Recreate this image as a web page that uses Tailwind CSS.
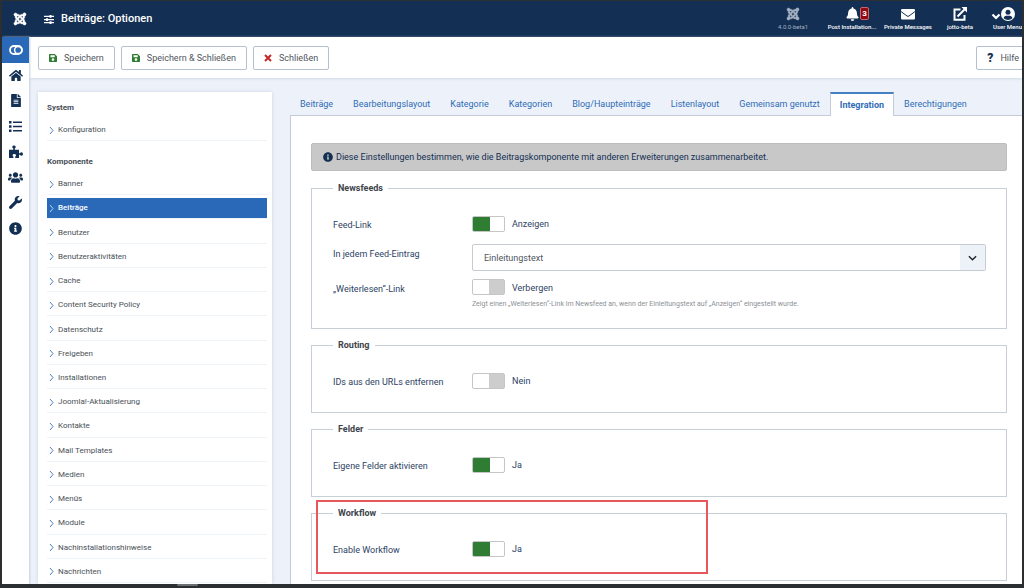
<!DOCTYPE html>
<html lang="de">
<head>
<meta charset="utf-8">
<meta name="viewport" content="width=device-width, initial-scale=1">
<title>Beiträge: Optionen</title>
<script src="https://cdn.jsdelivr.net/npm/@tailwindcss/browser@4"></script>
</head>
<body class="flex h-screen flex-col overflow-hidden bg-[#2b2f31] font-['Roboto',sans-serif] text-[9px] leading-[12px] text-[#2c4263]">

<svg class="hidden" aria-hidden="true">
  <symbol id="joomla" viewBox="0 0 448 512"><path d="M.6 92.1C.6 58.8 27.4 32 60.4 32c30 0 54.5 21.9 59.2 50.2 32.6-7.6 67.1.6 96.5 30l-44.3 44.3c-20.5-20.5-42.6-16.3-55.4-3.5-14.3 14.3-14.3 37.9 0 52.2l99.5 99.5-44 44.3c-87.7-87.2-49.7-49.7-99.8-99.7-26.8-26.5-35-64.8-24.8-98.9C20.4 144.6.6 120.7.6 92.1zm129.5 116.4l44.3 44.3c10-10 89.7-89.7 99.7-99.8 14.3-14.3 37.6-14.3 51.9 0 12.8 12.8 17 35-3.5 55.4l44 44.3c31.2-31.2 38.5-67.6 28.9-101.2 29.2-4.1 51.9-29.2 51.9-59.5 0-33.2-26.8-60.1-59.8-60.1-30.3 0-55.4 22.5-59.5 51.6-33.8-9.9-71.7-1.5-98.3 25.1-18.3 19.1-71.1 71.5-99.6 99.9zm266.3 152.2c8.2-32.7-.9-68.5-26.3-93.9-11.8-12.2 5 4.7-99.5-99.7l-44.3 44.3 99.7 99.7c14.3 14.3 14.3 37.6 0 51.9-12.8 12.8-35 17-55.4-3.5l-44 44.3c27.6 30.2 68 38.8 102.7 28 5.5 27.4 29.7 48.1 58.9 48.1 33 0 59.8-26.8 59.8-60.1 0-30.2-22.5-55-51.6-59.1zm-84.3-53.1l-44-44.3c-87 86.4-50.4 50.4-99.7 99.8-14.3 14.3-37.6 14.3-51.9 0-13.1-13.4-16.9-35.3 3.2-55.4l-44-44.3c-30.2 30.2-38 65.2-29.5 98.3-26.7 6-46.2 29.9-46.2 58.2C0 453.2 26.8 480 59.8 480c28.6 0 52.5-19.8 58.6-46.7 32.7 8.2 68.5-.6 94.2-26 32.1-32 12.2-12.4 99.5-99.7z"/></symbol>
  <symbol id="save" viewBox="0 0 16 16"><path fill-rule="evenodd" d="M1.500 0H11.500L16 4.500V14.500Q16 16 14.500 16H1.500Q0 16 0 14.500V1.500Q0 0 1.500 0zM3 2.500V6.500H11.500V2.500zM8 8.500a2.700 2.700 0 1 0 0 5.400a2.700 2.700 0 1 0 0-5.400z"/></symbol>
  <symbol id="info" viewBox="0 0 512 512"><path d="M256 8C119.043 8 8 119.083 8 256c0 136.997 111.043 248 248 248s248-111.003 248-248C504 119.083 392.957 8 256 8zm0 110c23.196 0 42 18.804 42 42s-18.804 42-42 42-42-18.804-42-42 18.804-42 42-42zm56 254c0 6.627-5.373 12-12 12h-88c-6.627 0-12-5.373-12-12v-24c0-6.627 5.373-12 12-12h12v-64h-12c-6.627 0-12-5.373-12-12v-24c0-6.627 5.373-12 12-12h64c6.627 0 12 5.373 12 12v100h12c6.627 0 12 5.373 12 12v24z"/></symbol>
  <symbol id="chevron" viewBox="0 0 5 9"><path d="M1 1L4 4.500L1 8" fill="none" stroke="currentColor" stroke-width="1"/></symbol>
</svg>

<div class="mx-[2px] mt-px flex min-h-0 flex-1 flex-col overflow-hidden bg-[#edf2fa]">

  <header class="flex h-9 shrink-0 items-center bg-[#132f53] text-white">
    <a href="#" aria-label="Joomla" class="ml-[11px]"><svg class="size-[14px] fill-current stroke-current" stroke-width="14"><use href="#joomla"/></svg></a>
    <svg class="ml-[17px] h-[9px] w-[10px] fill-current" viewBox="0 0 20 18" aria-hidden="true"><path d="M0 1.500h20v2.500H0zM0 7.800h20v2.500H0zM0 14h20v2.500H0zM11 0h4v5.500h-4zM4 6.300h4v5.500H4zM11 12.500h4V18h-4z"/></svg>
    <h1 class="ml-[7px] flex-1 text-[11px] leading-[14px] font-medium">Beiträge: Optionen</h1>
    <nav class="flex text-center text-[6px] leading-[8px] whitespace-nowrap" aria-label="Status">
      <div class="flex w-[60px] flex-col items-center gap-[2px] text-[#a4b0c2]">
        <svg class="size-[14px] fill-current stroke-current" stroke-width="14" aria-hidden="true"><use href="#joomla"/></svg>
        <span>4.0.0-beta1</span>
      </div>
      <a href="#" class="relative flex w-[58px] flex-col items-center gap-[2px] font-medium">
        <svg class="h-[14px] w-[13px] fill-current" viewBox="0 0 448 512" aria-hidden="true"><path d="M224 512c35.320 0 63.970-28.650 63.970-64H160.030c0 35.350 28.650 64 63.970 64zm215.390-149.710c-19.320-20.760-55.470-51.990-55.470-154.290 0-77.700-54.480-139.900-127.940-155.160V32c0-17.670-14.320-32-31.980-32s-31.980 14.330-31.980 32v20.840C118.560 68.100 64.080 130.300 64.080 208c0 102.300-36.150 133.530-55.470 154.290-6 6.450-8.660 14.160-8.610 21.710.110 16.400 12.980 32 32.100 32h383.800c19.120 0 32-15.600 32.100-32 .050-7.550-2.610-15.270-8.610-21.710z"/></svg>
        <span class="absolute top-0 left-[37px] h-[13px] w-[9px] rounded-xs border border-[#c9656b] bg-[#8f0a12] text-[8px] leading-[11px] font-bold">3</span>
        <span>Post Installation...</span>
      </a>
      <a href="#" class="flex w-[54px] flex-col items-center gap-[2px] font-medium">
        <svg class="size-[14px]" viewBox="0 0 14 14" aria-hidden="true"><rect y="2" width="14" height="10.500" rx="1.200" fill="#fff"/><path d="M0 4.500L6 9Q7 9.700 8 9L14 4.500" fill="none" stroke="#132f53"/></svg>
        <span>Private Messages</span>
      </a>
      <a href="#" class="flex w-[50px] flex-col items-center gap-[2px] font-medium">
        <svg class="size-[14px]" viewBox="0 0 14 14" fill="none" stroke="#fff" stroke-width="2" aria-hidden="true"><path d="M7.500 2.500H1.500V12.700H11.500V8M4.500 9.500L11.500 2.500"/><path d="M8.500 0H14V5.500z" fill="#fff" stroke="none"/></svg>
        <span>jotto-beta</span>
      </a>
      <a href="#" class="flex w-[37px] flex-col items-end gap-[2px] font-medium">
        <svg class="mr-[7px] h-[14px] w-[24px]" viewBox="0 0 24 14" aria-hidden="true"><path d="M1.500 7.500L5 11L8.500 7.500" fill="none" stroke="#fff" stroke-width="2.200"/><circle cx="17" cy="7" r="7" fill="#fff"/><circle cx="17" cy="5.300" r="2.500" fill="#132f53"/><path d="M12.500 11.300Q13 8.700 15 8.700H19Q21 8.700 21.500 11.300Q19.500 13 17 13T12.500 11.300z" fill="#132f53"/></svg>
        <span>User Menu</span>
      </a>
    </nav>
  </header>

  <div class="flex min-h-0 flex-1">
    <nav class="z-10 w-[27px] shrink-0 bg-white text-[#132f53] shadow-[1px_0_2px_#c3cfe0]" aria-label="Hauptmenü">
      <ul class="grid h-[204px] grid-rows-8">
        <li class="flex bg-[#2a69b8] text-white"><a href="#" aria-label="Menü umschalten" class="m-auto"><svg class="h-[10px] w-[14px]" viewBox="0 0 14 10" fill="none" stroke="currentColor" stroke-width="1.800"><rect x="1" y="1" width="12" height="8" rx="4"/><circle cx="9.200" cy="5" r="3.600" stroke-width="1.500"/></svg></a></li>
        <li class="flex"><a href="#" aria-label="Startseite" class="m-auto"><svg class="h-[13px] w-[14px] fill-current" viewBox="0 0 576 512"><path d="M280.370 148.260L96 300.110V464a16 16 0 0 0 16 16l112.060-.290a16 16 0 0 0 15.920-16V368a16 16 0 0 1 16-16h64a16 16 0 0 1 16 16v95.640a16 16 0 0 0 16 16.050L464 480a16 16 0 0 0 16-16V300L295.670 148.260a12.190 12.190 0 0 0-15.300 0zM571.600 251.470L488 182.560V44.050a12 12 0 0 0-12-12h-56a12 12 0 0 0-12 12v72.610L318.470 43a48 48 0 0 0-61 0L4.340 251.470a12 12 0 0 0-1.600 16.900l25.500 31A12 12 0 0 0 45.150 301l235.220-193.740a12.190 12.190 0 0 1 15.300 0L530.900 301a12 12 0 0 0 16.900-1.600l25.500-31a12 12 0 0 0-1.700-16.930z"/></svg></a></li>
        <li class="flex"><a href="#" aria-label="Inhalt" class="m-auto"><svg class="h-[13px] w-[10px] fill-current" viewBox="0 0 384 512"><path d="M224 136V0H24C10.700 0 0 10.700 0 24v464c0 13.300 10.700 24 24 24h336c13.300 0 24-10.700 24-24V160H248c-13.200 0-24-10.800-24-24zm64 236c0 6.600-5.400 12-12 12H108c-6.600 0-12-5.400-12-12v-8c0-6.600 5.400-12 12-12h168c6.600 0 12 5.400 12 12v8zm0-64c0 6.600-5.400 12-12 12H108c-6.600 0-12-5.400-12-12v-8c0-6.600 5.400-12 12-12h168c6.600 0 12 5.400 12 12v8zm0-72v8c0 6.600-5.400 12-12 12H108c-6.600 0-12-5.400-12-12v-8c0-6.600 5.400-12 12-12h168c6.600 0 12 5.400 12 12zm96-114.100v6.100H256V0h6.100c6.400 0 12.500 2.500 17 7l97.900 98c4.500 4.500 7 10.600 7 16.900z"/></svg></a></li>
        <li class="flex"><a href="#" aria-label="Menüs" class="m-auto"><svg class="h-[11px] w-[13px] fill-current" viewBox="0 0 13 11"><path d="M0 0h2.500v2.500H0zM0 4.200h2.500v2.500H0zM0 8.400h2.500v2.500H0zM4 .500h9v1.500H4zM4 4.700h9v1.500H4zM4 8.900h9v1.500H4z"/></svg></a></li>
        <li class="flex"><a href="#" aria-label="Komponenten" class="m-auto"><svg class="size-[14px] fill-current" viewBox="0 0 14 14"><path d="M0 4.800H4.300V3.500Q3.300 3 3.300 1.900Q3.300.500 5 .500T6.700 1.900Q6.700 3 5.800 3.500V4.800H10V8.200H11Q11.400 7.300 12.500 7.300Q14 7.300 14 9T12.500 10.700Q11.400 10.700 11 9.800H10V13H6.200V11.700Q7 11.200 7 10.300Q7 9 5.300 9T3.600 10.300Q3.600 11.200 4.400 11.700V13H0z"/></svg></a></li>
        <li class="flex"><a href="#" aria-label="Benutzer" class="m-auto"><svg class="h-[13px] w-[15px] fill-current" viewBox="0 0 640 512"><path d="M96 224c35.300 0 64-28.700 64-64s-28.700-64-64-64-64 28.700-64 64 28.700 64 64 64zm448 0c35.300 0 64-28.700 64-64s-28.700-64-64-64-64 28.700-64 64 28.700 64 64 64zm32 32h-64c-17.600 0-33.500 7.100-45.100 18.600 40.300 22.100 68.900 62 75.100 109.400h66c17.700 0 32-14.300 32-32v-32c0-35.300-28.700-64-64-64zm-256 0c61.900 0 112-50.100 112-112S381.900 32 320 32 208 82.100 208 144s50.100 112 112 112zm76.800 32h-8.300c-20.800 10-43.900 16-68.500 16s-47.600-6-68.500-16h-8.300C179.600 288 128 339.600 128 403.200V432c0 26.500 21.500 48 48 48h288c26.500 0 48-21.500 48-48v-28.800c0-63.600-51.600-115.200-115.200-115.200zm-223.700-13.400C161.500 263.100 145.600 256 128 256H64c-35.300 0-64 28.700-64 64v32c0 17.700 14.300 32 32 32h65.900c6.300-47.400 34.900-87.300 75.200-109.400z"/></svg></a></li>
        <li class="flex"><a href="#" aria-label="System" class="m-auto"><svg class="size-[13px] fill-current" viewBox="0 0 512 512"><path d="M507.730 109.100c-2.240-9.030-13.540-12.090-20.120-5.510l-74.360 74.360-67.880-11.310-11.310-67.880 74.360-74.360c6.620-6.620 3.430-17.900-5.660-20.160-47.380-11.740-99.550.910-136.580 37.930-39.640 39.640-50.550 97.100-34.050 147.200L18.740 402.760c-24.990 24.990-24.990 65.510 0 90.500 24.990 24.990 65.510 24.990 90.500 0l213.210-213.210c50.120 16.710 107.470 5.680 147.370-34.220 37.070-37.070 49.700-89.320 37.910-136.730z"/></svg></a></li>
        <li class="flex"><a href="#" aria-label="Hilfe" class="m-auto"><svg class="size-[13px] fill-current"><use href="#info"/></svg></a></li>
      </ul>
    </nav>

    <div class="flex min-w-0 flex-1 flex-col">
      <div class="flex h-[41px] shrink-0 items-center gap-[6px] bg-white pl-[9px] whitespace-nowrap text-[#4f5660] shadow-[0_1px_3px_#d3dbe8]">
        <button type="button" class="flex h-6 items-center gap-[7px] rounded-xs border border-[#b4c0cf] bg-white px-[10px]"><svg class="size-[8px] fill-[#2f7d32]" aria-hidden="true"><use href="#save"/></svg>Speichern</button>
        <button type="button" class="flex h-6 items-center gap-[7px] rounded-xs border border-[#b4c0cf] bg-white px-[10px]"><svg class="size-[8px] fill-[#2f7d32]" aria-hidden="true"><use href="#save"/></svg>Speichern &amp; Schließen</button>
        <button type="button" class="flex h-6 items-center gap-[7px] rounded-xs border border-[#b4c0cf] bg-white px-[10px]"><svg class="size-[8px]" viewBox="0 0 8 8" aria-hidden="true"><path d="M1 1L7 7M7 1L1 7" stroke="#c52827" stroke-width="2"/></svg>Schließen</button>
        <button type="button" class="-mr-[8px] ml-auto flex h-6 items-center gap-[7px] rounded-xs border border-[#b4c0cf] bg-white px-[10px]"><span class="text-[12px] font-black text-[#132f53]" aria-hidden="true">?</span>Hilfe</button>
      </div>

      <div class="flex min-h-0 flex-1 gap-[18px] pt-[14px] pl-[9px]">
        <aside class="flex w-[234px] shrink-0 flex-col bg-white px-[5px] pb-px pl-[9px] text-[8px] text-[#495057] shadow-[0_0_4px_#c9d3e2]">
          <h2 class="pt-[10px] font-bold">System</h2>
          <ul class="mt-[3px]">
            <li class="flex h-6 flex-col border-b border-[#edf3f7] pt-[3px]"><a href="#" class="flex flex-1 items-center gap-[4px] pl-[2px]"><svg class="h-[9px] w-[5px] text-[#4a7fc1]"><use href="#chevron"/></svg>Konfiguration</a></li>
          </ul>
          <h2 class="pt-[15px] font-bold">Komponente</h2>
          <ul class="mt-[3px] flex flex-1 flex-col [&>li]:flex [&>li]:flex-1 [&>li]:flex-col [&>li]:border-b [&>li]:border-[#edf3f7] [&>li]:pt-[3px] [&_a]:flex [&_a]:flex-1 [&_a]:items-center [&_a]:gap-[4px] [&_a]:pl-[2px] [&_svg]:h-[9px] [&_svg]:w-[5px] [&_svg]:text-[#4a7fc1]">
            <li><a href="#"><svg><use href="#chevron"/></svg>Banner</a></li>
            <li><a href="#" aria-current="page" class="bg-[#2a69b8] font-medium text-white"><svg><use href="#chevron" class="text-[#b9d2f0]"/></svg>Beiträge</a></li>
            <li><a href="#"><svg><use href="#chevron"/></svg>Benutzer</a></li>
            <li><a href="#"><svg><use href="#chevron"/></svg>Benutzeraktivitäten</a></li>
            <li><a href="#"><svg><use href="#chevron"/></svg>Cache</a></li>
            <li><a href="#"><svg><use href="#chevron"/></svg>Content Security Policy</a></li>
            <li><a href="#"><svg><use href="#chevron"/></svg>Datenschutz</a></li>
            <li><a href="#"><svg><use href="#chevron"/></svg>Freigeben</a></li>
            <li><a href="#"><svg><use href="#chevron"/></svg>Installationen</a></li>
            <li><a href="#"><svg><use href="#chevron"/></svg>Joomla!-Aktualisierung</a></li>
            <li><a href="#"><svg><use href="#chevron"/></svg>Kontakte</a></li>
            <li><a href="#"><svg><use href="#chevron"/></svg>Mail Templates</a></li>
            <li><a href="#"><svg><use href="#chevron"/></svg>Medien</a></li>
            <li><a href="#"><svg><use href="#chevron"/></svg>Menüs</a></li>
            <li><a href="#"><svg><use href="#chevron"/></svg>Module</a></li>
            <li><a href="#"><svg><use href="#chevron"/></svg>Nachinstallationshinweise</a></li>
            <li><a href="#"><svg><use href="#chevron"/></svg>Nachrichten</a></li>
          </ul>
        </aside>

        <main class="flex min-w-0 flex-1 flex-col">
          <div role="tablist" class="z-10 -mb-px flex h-6 shrink-0 items-stretch whitespace-nowrap text-[#2f6cb5]">
            <button type="button" role="tab" class="px-[10px]">Beiträge</button>
            <button type="button" role="tab" class="px-[10px]">Bearbeitungslayout</button>
            <button type="button" role="tab" class="px-[10px]">Kategorie</button>
            <button type="button" role="tab" class="px-[10px]">Kategorien</button>
            <button type="button" role="tab" class="px-[10px]">Blog/Haupteinträge</button>
            <button type="button" role="tab" class="px-[10px]">Listenlayout</button>
            <button type="button" role="tab" class="px-[10px]">Gemeinsam genutzt</button>
            <button type="button" role="tab" aria-selected="true" class="border-x border-t-2 border-x-[#c3ccd8] border-t-[#4580c2] bg-white px-[9px] font-bold">Integration</button>
            <button type="button" role="tab" class="px-[10px]">Berechtigungen</button>
          </div>

          <form class="flex flex-1 flex-col gap-[9px] border-t border-l border-[#c3ccd8] bg-white pt-[27px] pr-[15px] pl-5">
            <p class="mb-px flex h-7 shrink-0 items-center gap-[3px] rounded-xs border border-[#bdbdbd] bg-[#c8c8c8] pl-[11px] text-[#132f53]"><svg class="size-[10px] fill-current" aria-hidden="true"><use href="#info"/></svg>Diese Einstellungen bestimmen, wie die Beitragskomponente mit anderen Erweiterungen zusammenarbeitet.</p>

            <fieldset class="border border-[#c6cfd6] pr-5 pb-[18px] pl-[21px]">
              <legend class="px-[5px] leading-[14px] font-bold text-[#3d444b]">Newsfeeds</legend>
              <div class="mt-[21px] flex">
                <label for="feed-link" class="w-[139px] pt-[3px]">Feed-Link</label>
                <input id="feed-link" type="checkbox" role="switch" checked class="h-4 w-[33px] appearance-none rounded-xs border border-[#c6c6c6] bg-linear-to-r checked:from-[#2f7d32] checked:from-55% checked:to-white checked:to-55%">
                <span class="ml-[7px] pt-[2px]">Anzeigen</span>
              </div>
              <div class="mt-3 flex">
                <label for="feed-entry" class="w-[139px] pt-[4px]">In jedem Feed-Eintrag</label>
                <div class="relative flex-1">
                  <select id="feed-entry" class="block h-[27px] w-full appearance-none rounded-xs border border-[#c6cbd1] bg-white pl-[11px] text-[#4f5660]"><option>Einleitungstext</option><option>Gesamter Text</option></select>
                  <span class="pointer-events-none absolute inset-y-px right-px flex w-[25px] items-center justify-center bg-[#edf2f9]"><svg class="h-[6px] w-[9px]" viewBox="0 0 10 6" aria-hidden="true"><path d="M1 1L5 5L9 1" fill="none" stroke="#22262a" stroke-width="1.600"/></svg></span>
                </div>
              </div>
              <div class="mt-2 flex">
                <label for="read-more" class="w-[139px] pt-[4px]">„Weiterlesen“-Link</label>
                <div class="flex-1">
                  <div class="flex">
                    <input id="read-more" type="checkbox" role="switch" aria-describedby="read-more-help" class="h-4 w-[33px] appearance-none rounded-xs border border-[#c6c6c6] bg-linear-to-r from-white from-50% to-[#cdcdcd] to-50%">
                    <span class="ml-[7px] pt-[3px]">Verbergen</span>
                  </div>
                  <p id="read-more-help" class="mt-[3px] text-[7px] text-[#8b9096]">Zeigt einen „Weiterlesen“-Link im Newsfeed an, wenn der Einleitungstext auf „Anzeigen“ eingestellt wurde.</p>
                </div>
              </div>
            </fieldset>

            <fieldset class="border border-[#c6cfd6] pr-5 pb-[23px] pl-[21px]">
              <legend class="px-[5px] leading-[14px] font-bold text-[#3d444b]">Routing</legend>
              <div class="mt-[21px] flex">
                <label for="remove-ids" class="w-[139px] pt-[3px]">IDs aus den URLs entfernen</label>
                <input id="remove-ids" type="checkbox" role="switch" class="h-4 w-[33px] appearance-none rounded-xs border border-[#c6c6c6] bg-linear-to-r from-white from-50% to-[#cdcdcd] to-50%">
                <span class="ml-[7px] pt-[2px]">Nein</span>
              </div>
            </fieldset>

            <fieldset class="border border-[#c6cfd6] pr-5 pb-[23px] pl-[21px]">
              <legend class="px-[5px] leading-[14px] font-bold text-[#3d444b]">Felder</legend>
              <div class="mt-[21px] flex">
                <label for="custom-fields" class="w-[139px] pt-[3px]">Eigene Felder aktivieren</label>
                <input id="custom-fields" type="checkbox" role="switch" checked class="h-4 w-[33px] appearance-none rounded-xs border border-[#c6c6c6] bg-linear-to-r checked:from-[#2f7d32] checked:from-55% checked:to-white checked:to-55%">
                <span class="ml-[7px] pt-[2px]">Ja</span>
              </div>
            </fieldset>

            <div class="relative">
              <fieldset class="border border-[#c6cfd6] pr-5 pb-[23px] pl-[21px]">
                <legend class="px-[5px] leading-[14px] font-bold text-[#3d444b]">Workflow</legend>
                <div class="mt-[21px] flex">
                  <label for="workflow" class="w-[139px] pt-[3px]">Enable Workflow</label>
                  <input id="workflow" type="checkbox" role="switch" checked class="h-4 w-[33px] appearance-none rounded-xs border border-[#c6c6c6] bg-linear-to-r checked:from-[#2f7d32] checked:from-55% checked:to-white checked:to-55%">
                  <span class="ml-[7px] pt-[2px]">Ja</span>
                </div>
              </fieldset>
              <div class="pointer-events-none absolute -top-[6px] bottom-[7px] left-[5px] w-[392px] border-2 border-[#e5585b]"></div>
            </div>
          </form>
        </main>
      </div>
    </div>
  </div>
</div>
<div class="flex h-1 shrink-0 pl-[177px]"><span class="h-[2px] w-[21px] rounded-full bg-[#6b6f71]"></span></div>
</body>
</html>
